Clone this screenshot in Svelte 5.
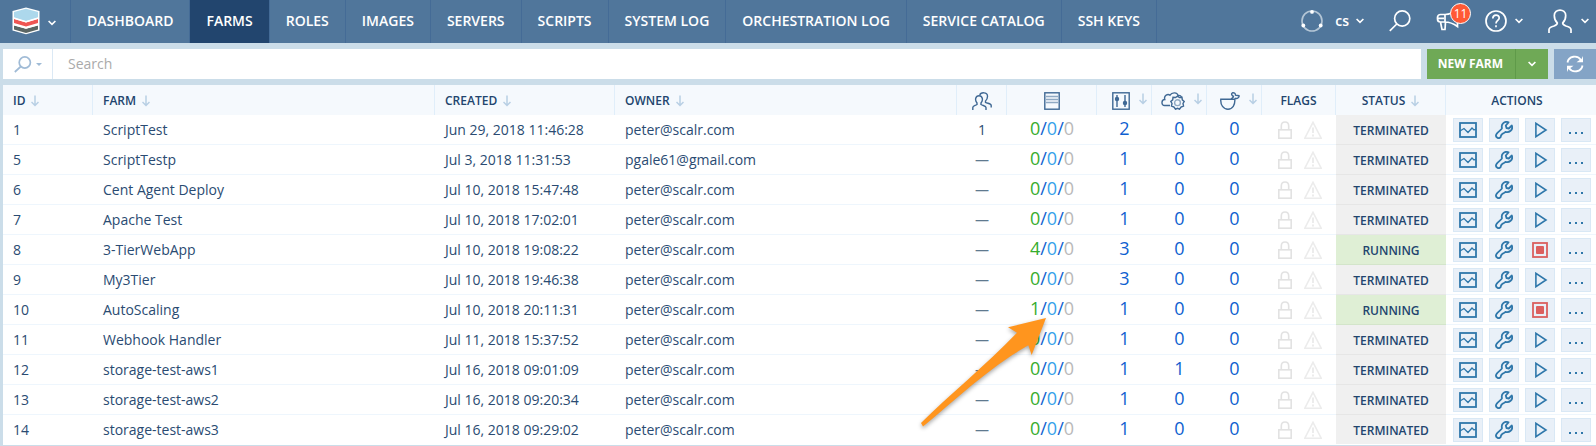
<script>
  const nav = ['DASHBOARD', 'FARMS', 'ROLES', 'IMAGES', 'SERVERS', 'SCRIPTS', 'SYSTEM LOG', 'ORCHESTRATION LOG', 'SERVICE CATALOG', 'SSH KEYS'];
  const active = 'FARMS';

  const farm = (id, name, created, owner, teams, running, roles, cloud) => ({ id, name, created, owner, teams, running, roles, cloud });
  const farms = [
    farm(1, 'ScriptTest', 'Jun 29, 2018 11:46:28', 'peter@scalr.com', '1', 0, 2, 0),
    farm(5, 'ScriptTestp', 'Jul 3, 2018 11:31:53', 'pgale61@gmail.com', '', 0, 1, 0),
    farm(6, 'Cent Agent Deploy', 'Jul 10, 2018 15:47:48', 'peter@scalr.com', '', 0, 1, 0),
    farm(7, 'Apache Test', 'Jul 10, 2018 17:02:01', 'peter@scalr.com', '', 0, 1, 0),
    farm(8, '3-TierWebApp', 'Jul 10, 2018 19:08:22', 'peter@scalr.com', '', 4, 3, 0),
    farm(9, 'My3Tier', 'Jul 10, 2018 19:46:38', 'peter@scalr.com', '', 0, 3, 0),
    farm(10, 'AutoScaling', 'Jul 10, 2018 20:11:31', 'peter@scalr.com', '', 1, 1, 0),
    farm(11, 'Webhook Handler', 'Jul 11, 2018 15:37:52', 'peter@scalr.com', '', 0, 1, 0),
    farm(12, 'storage-test-aws1', 'Jul 16, 2018 09:01:09', 'peter@scalr.com', '', 0, 1, 1),
    farm(13, 'storage-test-aws2', 'Jul 16, 2018 09:20:34', 'peter@scalr.com', '', 0, 1, 0),
    farm(14, 'storage-test-aws3', 'Jul 16, 2018 09:29:02', 'peter@scalr.com', '', 0, 1, 0)
  ];
</script>

{#snippet caret()}
  <svg class="caret" width="8" height="6" viewBox="0 0 8 6"><path d="M.6 1 4 4.400 7.400 1" /></svg>
{/snippet}

{#snippet arrow()}
  <svg class="sort" width="8" height="12" viewBox="0 0 8 12"><path d="M4 .5V10.500M.5 7 4 10.500 7.500 7" /></svg>
{/snippet}

<div class="app">
  <header>
    <button class="brand" aria-label="Main menu">
      <svg width="28" height="28" viewBox="0 0 28 28">
        <path d="M14 .5 27.500 4V23.500L14 27.300.5 23.500V4Z" fill="#fff" />
        <path d="M14 1.800 26 5V10.300L14 14 2 10.300V5Z" fill="#add8ec" />
        <path d="M2 12 14 15.500 26 12V16L14 19.600 2 16Z" fill="#ef5653" />
        <path d="M2 18.500 14 21.800 26 18.500V22.600L14 26 2 22.600Z" fill="#5b6664" />
        <path d="M1 11 14 14.900 27 11M1 17.400 14 21 27 17.400" fill="none" stroke="#fff" stroke-width="1.300" />
      </svg>
      {@render caret()}
    </button>
    <nav>
      {#each nav as item}
        <a href="#top" class:active={item === active}>{item}</a>
      {/each}
    </nav>
    <div class="tools">
      <button class="env">
        <svg width="22" height="22" viewBox="0 0 22 22">
          <circle cx="11" cy="11" r="10" fill="none" stroke="#b4c6d6" stroke-width="1.600" />
          <circle cx="11" cy="1.900" r="1.900" fill="#fff" /><circle cx="2.300" cy="15.500" r="1.900" fill="#fff" /><circle cx="19.700" cy="15.500" r="1.900" fill="#fff" />
        </svg>
        <span>cs</span>
        {@render caret()}
      </button>
      <button aria-label="Search">
        <svg class="line" width="22" height="22" viewBox="0 0 22 22"><circle cx="13.200" cy="8.500" r="7.600" /><path d="M7.800 14 .8 20.800" /></svg>
      </button>
      <button class="news" aria-label="News">
        <svg class="line" width="24" height="20" viewBox="0 0 24 20">
          <path d="M9 3.500H4.500A3 3 0 0 0 1.500 6.500V8A3 3 0 0 0 4.500 11H9.500M9 3.500C12 3.500 15 2.500 18 .8M9 3.500V11C14 11 18 13 21.500 15.500V8M4.500 11 6 18.500H9L9.500 11M1.500 7.300H8" />
        </svg>
        <span class="badge">11</span>
      </button>
      <button class="pair" aria-label="Help">
        <svg class="line" width="22" height="22" viewBox="0 0 22 22">
          <circle cx="11" cy="11" r="10" /><path d="M7.800 8.500C7.800 4 14.200 4 14.200 8 14.200 10.500 11 10.500 11 13.500" /><path d="M11 15.300V17.300" />
        </svg>
        {@render caret()}
      </button>
      <button class="pair user" aria-label="Account">
        <svg class="line" width="24" height="24" viewBox="0 0 24 24">
          <path d="M1 24V20.500C1 18.500 3 18 6 17C8.500 16 9.500 15.500 9.300 14C6.500 11.500 6.300 9 6.300 6.500C6.300-.8 17.700-.8 17.700 6.500C17.700 9 17.500 11.500 14.700 14C14.500 15.500 15.500 16 18 17C21 18 23 18.500 23 20.500V24" />
        </svg>
        {@render caret()}
      </button>
    </div>
  </header>

  <div class="toolbar">
    <div class="search">
      <button class="scope" aria-label="Search options">
        <svg width="18" height="17" viewBox="0 0 18 17"><circle cx="10.800" cy="6.500" r="5.600" /><path d="M6.800 10.500.8 16" /></svg>
        <svg class="drop" width="6" height="3" viewBox="0 0 6 3"><path d="M0 0H6L3 3Z" /></svg>
      </button>
      <input type="text" placeholder="Search" aria-label="Search farms" />
    </div>
    <div class="split">
      <button class="new">NEW FARM</button>
      <button class="more" aria-label="More options">{@render caret()}</button>
    </div>
    <button class="refresh" aria-label="Refresh">
      <svg width="18" height="18" viewBox="0 0 18 18">
        <path d="M1.500 7.500C2.500 1 11.500-.5 15 5M16.500 10.500C15.500 17 6.500 18.500 3 13" fill="none" stroke="#fff" stroke-width="1.800" />
        <path d="M17 1V7.200H10.500L12.500 5.700 15.500 4ZM1 17V10.800H7.500L5.500 12.300 2.500 14Z" fill="#fff" />
      </svg>
    </button>
  </div>

  <div class="grid">
    <table>
      <colgroup>
        <col class="w90" /><col /><col class="w180" /><col /><col class="w50" /><col class="w90" />
        <col class="w55" /><col class="w55" /><col class="w55" /><col class="w74" /><col class="w110" /><col class="w150" />
      </colgroup>
      <thead>
        <tr>
          <th><span class="head">ID {@render arrow()}</span></th>
          <th><span class="head">FARM {@render arrow()}</span></th>
          <th><span class="head">CREATED {@render arrow()}</span></th>
          <th><span class="head">OWNER {@render arrow()}</span></th>
          <th class="flush" aria-label="Teams"><span class="head mid">
            <svg class="ico" width="20" height="18" viewBox="0 0 20 18">
              <path d="M.8 18V15.500C.8 13.800 3 13.700 5 12.500V11C2.500 8 3.500 3.800 7 3.800S11.500 8 9 11V12.500C11 13.700 14 13.800 14 15.500V18M7.800 3C8.500.2 15.800-.5 15.500 4.500C15.400 7 14.800 8 13.500 9V10.300C15.500 11.500 19.200 11.500 19.200 13.500V15.500" />
            </svg></span></th>
          <th class="flush" aria-label="Servers"><span class="head mid">
            <svg class="ico" width="16" height="18" viewBox="0 0 16 18">
              <path d="M2 4.500H14M2 7.500H14M2 10.500H14" stroke="#8fa9c3" /><rect x=".8" y=".8" width="14.400" height="16.400" />
            </svg></span></th>
          <th class="flush" aria-label="Roles"><span class="head iconic">
            <svg class="ico" width="18" height="18" viewBox="0 0 18 18">
              <rect x=".8" y=".8" width="16.400" height="16.400" /><path d="M5 3V15M13 3V15" /><circle cx="5" cy="7" r="1.500" fill="#3f6894" /><circle cx="13" cy="11" r="1.500" fill="#3f6894" />
            </svg>{@render arrow()}</span></th>
          <th class="flush" aria-label="Cloud services"><span class="head iconic">
            <svg class="ico" width="24" height="18" viewBox="0 0 24 18">
              <path d="M9 13.500H3.500C0 13.500.2 7.500 3.800 7.500C2.500 3 7 1.500 9 3.200C11-.2 16.500.3 17 3.500C18.500 3.200 20 4 20.500 5" />
              <path d="M16.500 4.200 18.500 5.500 21 5.300 21.300 7.800 23.200 9.500 22 11.500 22.500 14 20 15 18.500 17.200 16.500 16.300 14.500 17.200 13 15 10.500 14 11 11.500 9.800 9.500 11.700 7.800 12 5.300 14.500 5.500Z" /><circle cx="16.500" cy="10.700" r="2.900" stroke="#8fa9c3" />
            </svg>{@render arrow()}</span></th>
          <th class="flush" aria-label="Recipes"><span class="head iconic">
            <svg class="ico" width="20" height="18" viewBox="0 0 20 18">
              <path d="M.8 7.200H14.800C15.300 13 12.500 17.200 8 17.200S.3 13 .8 7.200ZM11 7 14 4.500M14.500 7.200 15.500 6.300C17.500 7 19.500 5 19 3.700L15.500 3.200C15.500 1.500 14.500.5 12.500.8C11 1.500 11.500 4 14 4.500" />
            </svg>{@render arrow()}</span></th>
          <th class="flush"><span class="head mid">FLAGS</span></th>
          <th class="flush"><span class="head mid">STATUS {@render arrow()}</span></th>
          <th class="flush last"><span class="head mid">ACTIONS</span></th>
        </tr>
      </thead>
      <tbody>
        {#each farms as f (f.id)}
          <tr>
            <td>{f.id}</td>
            <td>{f.name}</td>
            <td>{f.created}</td>
            <td>{f.owner}</td>
            <td class="center">{#if f.teams}{f.teams}{:else}<span class="none">—</span>{/if}</td>
            <td class="num"><a href="#servers"><span class="up">{f.running}</span>/<span class="wait">0</span>/<span class="off">0</span></a></td>
            <td class="num"><a href="#roles">{f.roles}</a></td>
            <td class="num"><a href="#services">{f.cloud}</a></td>
            <td class="num"><a href="#recipes">0</a></td>
            <td class="flush">
              <div class="flags">
                <svg width="14" height="18" viewBox="0 0 14 18"><rect x=".8" y="8.800" width="12.400" height="8.400" /><path d="M3.300 8.500V5C3.300-.4 10.700-.4 10.700 5V8.500" /></svg>
                <svg class="warn" width="18" height="18" viewBox="0 0 18 18"><path d="M9 1.300 17.200 17.200H.8Z" /><path d="M9 6.500V12M9 13.500V15.500" stroke-width="2" /></svg>
              </div>
            </td>
            <td class="center status" class:running={f.running > 0}>{f.running > 0 ? 'RUNNING' : 'TERMINATED'}</td>
            <td class="flush">
              <div class="actions">
                <button aria-label="Load statistics">
                  <svg width="18" height="16" viewBox="0 0 18 16"><rect x="1" y="1" width="16" height="14" /><path d="M1 9 5 6.500 9 10.500 13 6 15 8 17 7" stroke-width="1.300" /></svg>
                </button>
                <button aria-label="Configure">
                  <svg width="18" height="18" viewBox="0 0 18 18"><path d="M13.500 1.300C9.500-.3 5.800 3 7 7.300C7 8.500 2.500 11 1.500 13C-.3 16 3.500 18.500 5.600 16.200C6 15 5.500 14.500 7 13.200C8 12.200 9.300 12.300 10.500 10.800C14 12 18.500 9 16.800 4.500L13.800 7.500 11.500 7 10.800 4.500Z" stroke-linejoin="round" /></svg>
                </button>
                {#if f.running > 0}
                  <button aria-label="Terminate" class="stop">
                    <svg width="16" height="16" viewBox="0 0 16 16"><rect x="1" y="1" width="14" height="14" /><rect x="4" y="4" width="8" height="8" rx="1" fill="#db5f5f" stroke="none" /></svg>
                  </button>
                {:else}
                  <button aria-label="Launch">
                    <svg width="16" height="16" viewBox="0 0 16 16"><path d="M3.900 1.300V14.700L14 8Z" stroke-width="1.600" /></svg>
                  </button>
                {/if}
                <button aria-label="More actions">
                  <svg width="16" height="16" viewBox="0 0 16 16"><path d="M1 11H3M7 11H9M13 11H15" /></svg>
                </button>
              </div>
            </td>
          </tr>
        {/each}
      </tbody>
    </table>
    <svg class="pointer" width="134" height="120" viewBox="0 0 134 120">
      <path d="M129 4 91 13.300 100 18.700C68 52 32 81 4 109L6 112.500C38 86 74 52 111.300 31.300L114.700 41Z" fill="#ff951e" />
    </svg>
  </div>
</div>

<style>
  :global(body) { margin: 0; background: #cbdde9; }
  .app { font: 14px/20px "Open Sans", sans-serif; color: #2a4b72; }
  button { margin: 0; padding: 0; border: 0; background: none; color: inherit; font: inherit; display: flex; align-items: center; justify-content: center; cursor: pointer; }
  svg { display: block; flex: none; }
  a { color: inherit; text-decoration: none; }

  header { display: flex; height: 43px; background: #50769b; color: #fff; font-weight: 600; }
  .brand { gap: 8px; padding: 0 14px 2px 12px; border-right: 1px solid #446b96; }
  .caret { fill: none; stroke: currentColor; stroke-width: 1.6; }
  .brand .caret { margin-top: 4px; }
  nav { display: flex; white-space: nowrap; }
  nav a { display: flex; align-items: center; padding: 0 16px 2px; border-right: 1px solid #446b96; }
  nav a.active { background: #22456e; }
  .tools { display: flex; align-items: center; margin-left: auto; padding: 0 7px 2px 0; gap: 25px; }
  .env { gap: 7px; }
  .env span { margin-left: 5px; }
  .pair { gap: 8px; }
  .line { fill: none; stroke: #fff; stroke-width: 1.7; }
  .user { gap: 9px; }
  .news { position: relative; }
  .badge { position: absolute; left: 14px; top: -8px; width: 19px; height: 19px; border: 1px solid #fff; border-radius: 50%; background: #ff5a36; font: 12px/19px "Open Sans", sans-serif; text-align: center; }

  .toolbar { display: flex; gap: 6px; height: 30px; padding: 6px 0 6px 3px; }
  .search { display: flex; flex: 1; background: #fff; }
  .scope { gap: 4px; width: 50px; border-right: 1px solid #dbe9f5; }
  .scope svg { fill: none; stroke: #a0bbd6; stroke-width: 1.7; }
  .scope .drop { fill: #a0bbd6; stroke: none; }
  input { flex: 1; min-width: 0; border: 0; padding: 0 15px; background: none; color: #2a4b72; font: inherit; outline: 0; }
  input::placeholder { color: #aaa; opacity: 1; }
  .split { display: flex; background: #6fa956; color: #fff; }
  .new { padding: 0 12px 0 11px; font-size: 12px; font-weight: 700; border-right: 1px solid #5f9a49; }
  .more { width: 32px; }
  .refresh { width: 42px; background: #84a4c6; }

  .grid { position: relative; padding-left: 3px; border-bottom: 1px solid #cbdde9; }
  table { width: 100%; table-layout: fixed; border-collapse: separate; border-spacing: 0; background: #fff; }
  .w50 { width: 50px; } .w55 { width: 55px; } .w74 { width: 74px; } .w90 { width: 90px; }
  .w110 { width: 110px; } .w150 { width: 150px; } .w180 { width: 180px; }
  th { height: 30px; padding: 2px 0 0 10px; box-sizing: border-box; background: #f5f9fd; border-right: 1px solid #e0eefa; font-size: 12px; font-weight: 600; color: #22456e; text-align: left; }
  th.flush, td.flush { padding-left: 0; }
  th.last { padding-right: 8px; border-right: 0; }
  .head { display: flex; align-items: center; gap: 6px; }
  .sort { fill: none; stroke: #b8cfe4; stroke-width: 1.5; }
  .ico { fill: none; stroke: #3f6894; stroke-width: 1.4; }
  .head.mid { justify-content: center; }
  .head.iconic { justify-content: flex-end; gap: 9px; padding-right: 4px; }
  .iconic .sort { margin-bottom: 4px; }
  td { height: 30px; padding: 0 0 0 10px; box-sizing: border-box; border-bottom: 1px solid #eef6fd; white-space: nowrap; }
  tbody tr:last-child td { border-bottom-color: #fff; }
  td.center, td.num { padding-left: 0; text-align: center; }
  .none { color: #60798f; }
  td.num { padding-bottom: 3px; font-size: 18px; color: #0f5fd0; }
  .up { color: #37ad2e; } .wait { color: #35a2ea; } .off { color: #b9b9b9; }
  .flags { display: flex; justify-content: center; gap: 12px; padding-left: 2px; }
  .flags svg { fill: none; stroke: #e2e2e2; stroke-width: 1.6; }
  .flags .warn { stroke: #ececec; }
  td.status { padding-top: 2px; background: #f0f0f0; border-bottom-color: #e6e6e6; font-size: 12px; font-weight: 600; color: #22456e; }
  td.status.running { background: #dfefd5; border-bottom-color: #d3e5ca; }
  .actions { display: flex; gap: 6px; margin-left: 7px; }
  .actions button { box-sizing: border-box; width: 30px; height: 24px; border: 1px solid #d9e8f5; background: #e9f0f8; }
  .actions svg { fill: none; stroke: #2f77aa; stroke-width: 1.8; }
  .actions .stop svg { stroke: #db5f5f; }
  .pointer { position: absolute; right: 545px; top: 229px; filter: drop-shadow(0 2px 2px rgba(0, 0, 0, .35)); pointer-events: none; }
</style>
